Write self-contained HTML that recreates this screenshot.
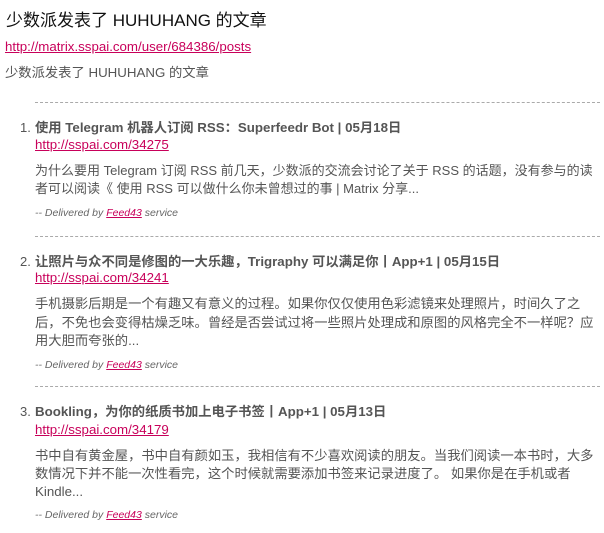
<!DOCTYPE html>
<html><head><meta charset="utf-8"><style>
body{margin:0;background:#fff;width:604px;height:533px;overflow:hidden;position:relative;font-family:"Liberation Sans","Noto Sans CJK SC",sans-serif;color:#555}
.a{position:absolute;white-space:nowrap;line-height:1}
a{color:#c8005a;text-decoration:underline}
.h{font-size:17px;color:#111}
.t{font-size:13.3px;font-weight:bold;color:#555}
.l{font-size:13.3px}
.d{font-size:13.3px;color:#555}
.s{font-size:10.5px;font-style:italic;color:#666}
.hr{position:absolute;left:35px;width:565px;border-top:1px dashed #aaa;height:0}
.n{font-size:13px;color:#555}
</style></head><body>
<div class="a h" style="left:6px;top:12px">少数派发表了 HUHUHANG 的文章</div>
<div class="a l" style="left:5px;top:40px"><a>http://matrix.sspai.com/user/684386/posts</a></div>
<div class="a d" style="left:5px;top:66px">少数派发表了 HUHUHANG 的文章</div>
<div class="hr" style="top:102px"></div>

<div class="a n" style="left:20px;top:121px">1.</div>
<div class="a t" style="left:35px;top:121px">使用 Telegram 机器人订阅 RSS：Superfeedr Bot | 05月18日</div>
<div class="a l" style="left:35px;top:138px"><a>http://sspai.com/34275</a></div>
<div class="a d" style="left:35px;top:164px;font-size:13px">为什么要用 Telegram 订阅 RSS 前几天，少数派的交流会讨论了关于 RSS 的话题，没有参与的读</div>
<div class="a d" style="left:35px;top:182px;font-size:13px">者可以阅读《 使用 RSS 可以做什么你未曾想过的事 | Matrix 分享...</div>
<div class="a s" style="left:35px;top:208px">-- Delivered by <a>Feed43</a> service</div>
<div class="hr" style="top:236px"></div>

<div class="a n" style="left:20px;top:255px">2.</div>
<div class="a t" style="left:35px;top:255px">让照片与众不同是修图的一大乐趣，Trigraphy 可以满足你丨App+1 | 05月15日</div>
<div class="a l" style="left:35px;top:271px"><a>http://sspai.com/34241</a></div>
<div class="a d" style="left:35px;top:297px">手机摄影后期是一个有趣又有意义的过程。如果你仅仅使用色彩滤镜来处理照片，时间久了之</div>
<div class="a d" style="left:35px;top:316px">后，不免也会变得枯燥乏味。曾经是否尝试过将一些照片处理成和原图的风格完全不一样呢？应</div>
<div class="a d" style="left:35px;top:334px">用大胆而夸张的...</div>
<div class="a s" style="left:35px;top:360px">-- Delivered by <a>Feed43</a> service</div>
<div class="hr" style="top:386px"></div>

<div class="a n" style="left:20px;top:405px">3.</div>
<div class="a t" style="left:35px;top:405px">Bookling，为你的纸质书加上电子书签丨App+1 | 05月13日</div>
<div class="a l" style="left:35px;top:423px"><a>http://sspai.com/34179</a></div>
<div class="a d" style="left:35px;top:449px">书中自有黄金屋，书中自有颜如玉，我相信有不少喜欢阅读的朋友。当我们阅读一本书时，大多</div>
<div class="a d" style="left:35px;top:467px">数情况下并不能一次性看完，这个时候就需要添加书签来记录进度了。 如果你是在手机或者</div>
<div class="a d" style="left:35px;top:485px">Kindle...</div>
<div class="a s" style="left:35px;top:510px">-- Delivered by <a>Feed43</a> service</div>
</body></html>
